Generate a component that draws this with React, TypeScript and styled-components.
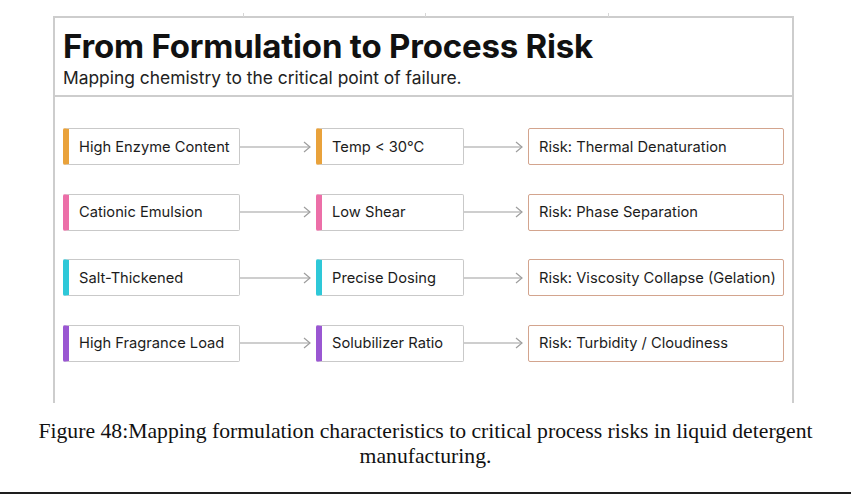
import styled, { createGlobalStyle } from 'styled-components';

const GlobalStyle = createGlobalStyle`
  html, body {
    margin: 0;
    padding: 0;
    background: #ffffff;
  }
  body {
    font-family: Inter, 'Noto Sans', sans-serif;
  }
`;

const Page = styled.div`
  width: 851px;
  height: 495px;
  display: flex;
  flex-direction: column;
  overflow: hidden;
`;

const Frame = styled.div`
  position: relative;
  margin: 16px 0 0 53px;
  width: 741px;
  height: 387px;
  box-sizing: border-box;
  border: 2px solid #cdcdcd;
  border-bottom: none;
  display: flex;
  flex-direction: column;
`;

// little marks that poke up above the top edge of the figure
const Tick = styled.span<{ $left: number }>`
  position: absolute;
  top: -5px;
  left: ${(p) => p.$left}px;
  width: 1px;
  height: 4px;
  background: #d6d6d6;
`;

const Header = styled.div`
  padding: 9px 8px 7px;
  border-bottom: 2px solid #cdcdcd;
  display: flex;
  flex-direction: column;
  gap: 3px;
`;

const Title = styled.h1`
  margin: 0;
  font-size: 33px;
  line-height: 38px;
  font-weight: 700;
  color: #111111;
  letter-spacing: -0.2px;
`;

const Subtitle = styled.p`
  margin: 0;
  font-size: 17.4px;
  line-height: 20px;
  color: #222222;
`;

const Rows = styled.div`
  padding: 31px 8px 0;
  display: flex;
  flex-direction: column;
  gap: 28.5px;
`;

const Row = styled.div`
  display: grid;
  grid-template-columns: 177px 76px 148px 64px 256px;
  align-items: center;
  height: 37px;
`;

const Box = styled.div<{ $accent?: string; $risk?: boolean }>`
  height: 37px;
  box-sizing: border-box;
  display: flex;
  align-items: center;
  border: 1.5px solid ${(p) => (p.$risk ? '#d3a48e' : '#c9c9c9')};
  border-left: ${(p) => (p.$accent ? `6px solid ${p.$accent}` : '1.5px solid #d3a48e')};
  border-radius: 2px;
  padding-left: 10px;
  font-size: 14.7px;
  color: #1c1c1c;
  white-space: nowrap;
  background: #ffffff;
`;

const ArrowWrap = styled.div`
  height: 37px;
  display: flex;
  align-items: center;
`;

const Caption = styled.div`
  margin-top: 16px;
  text-align: center;
  font-family: 'Liberation Serif', 'Times New Roman', serif;
  font-size: 21.7px;
  line-height: 25px;
  color: #111111;
  padding: 0 20px;
`;

const Rule = styled.div`
  margin-top: auto;
  margin-bottom: 1px;
  height: 2px;
  background: #1e1e1e;
`;

function Arrow({ width }: { width: number }) {
  const end = width - 6;
  return (
    <ArrowWrap>
      <svg width={width} height={14} viewBox={`0 0 ${width} 14`}>
        <line x1={0} y1={7} x2={end} y2={7} stroke="#9e9e9e" strokeWidth={1.2} />
        <polyline
          points={`${end - 6},2 ${end},7 ${end - 6},12`}
          fill="none"
          stroke="#9e9e9e"
          strokeWidth={1.2}
        />
      </svg>
    </ArrowWrap>
  );
}

const rows = [
  { source: 'High Enzyme Content', control: 'Temp < 30°C', risk: 'Risk: Thermal Denaturation', color: '#e9a23b' },
  { source: 'Cationic Emulsion', control: 'Low Shear', risk: 'Risk: Phase Separation', color: '#ec6fa8' },
  { source: 'Salt-Thickened', control: 'Precise Dosing', risk: 'Risk: Viscosity Collapse (Gelation)', color: '#2ec8d8' },
  { source: 'High Fragrance Load', control: 'Solubilizer Ratio', risk: 'Risk: Turbidity / Cloudiness', color: '#9a57d2' },
];

export default function App() {
  return (
    <>
      <GlobalStyle />
      <Page>
        <Frame>
          <Tick $left={188} />
          <Tick $left={370} />
          <Tick $left={553} />
          <Header>
            <Title>From Formulation to Process Risk</Title>
            <Subtitle>Mapping chemistry to the critical point of failure.</Subtitle>
          </Header>
          <Rows>
            {rows.map((r) => (
              <Row key={r.source}>
                <Box $accent={r.color}>{r.source}</Box>
                <Arrow width={76} />
                <Box $accent={r.color}>{r.control}</Box>
                <Arrow width={64} />
                <Box $risk>{r.risk}</Box>
              </Row>
            ))}
          </Rows>
        </Frame>
        <Caption>
          Figure 48:Mapping formulation characteristics to critical process risks in liquid detergent
          manufacturing.
        </Caption>
        <Rule />
      </Page>
    </>
  );
}
